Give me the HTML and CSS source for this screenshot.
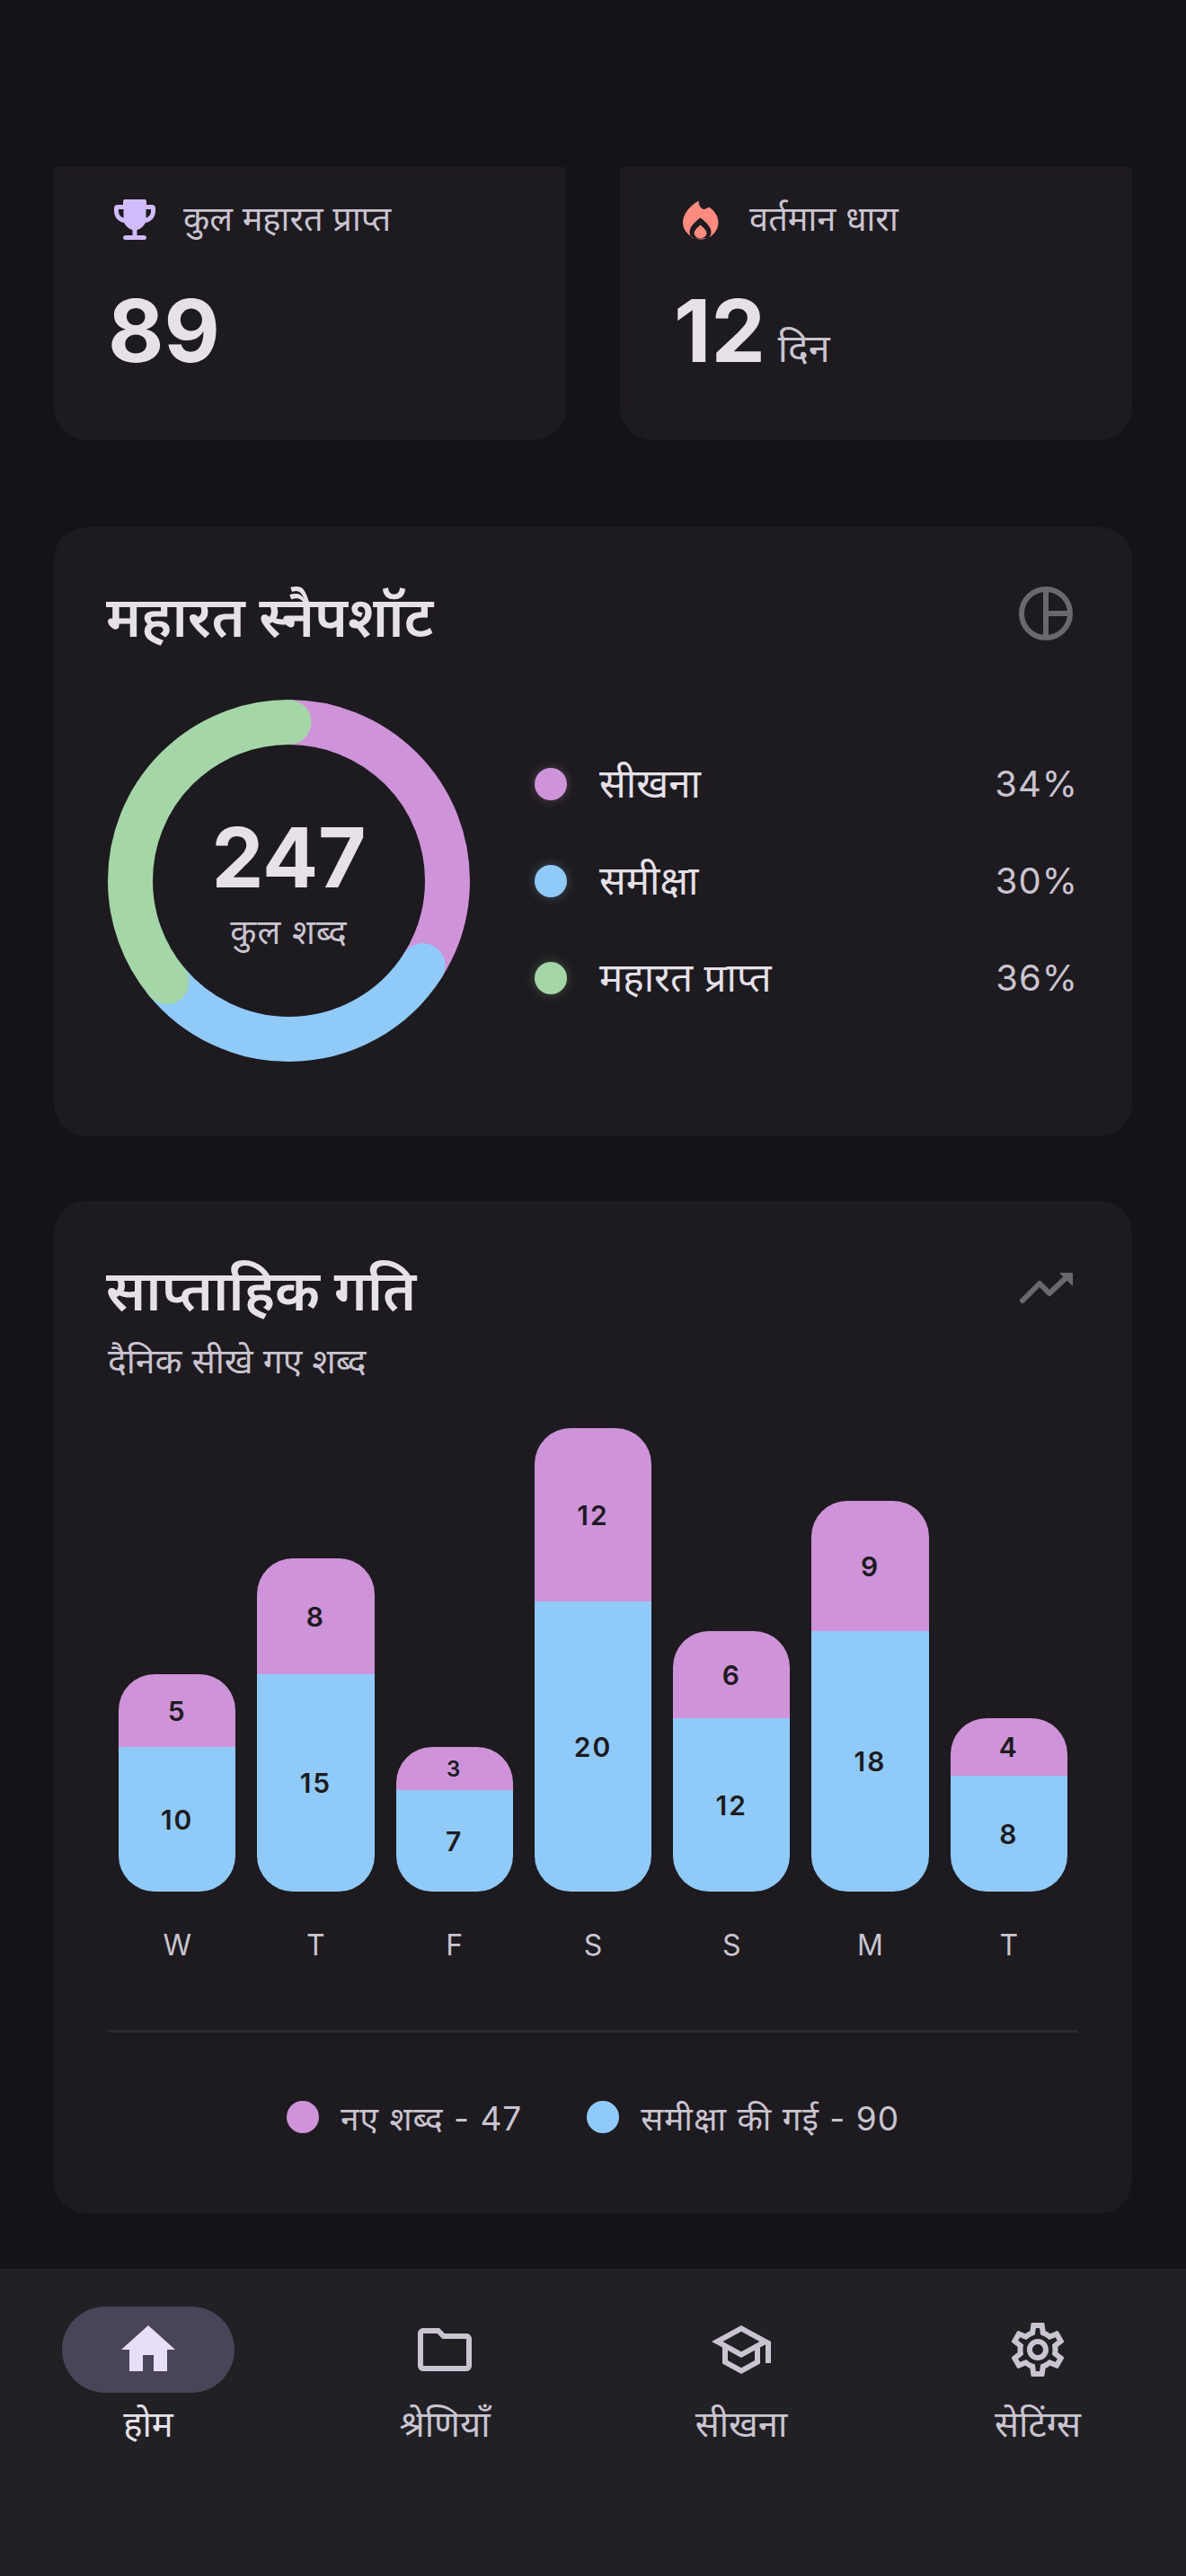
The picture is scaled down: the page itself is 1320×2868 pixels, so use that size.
FILE: index.html
```html
<!DOCTYPE html>
<html lang="hi">
<head>
    <meta charset="UTF-8">
    <meta name="viewport" content="width=device-width, initial-scale=1.0">
    <title>महारत</title>
    <link rel="stylesheet" href="styles.css">
</head>
<body>
    <div class="screen">
        <div class="content">
            <div class="stats">
                <div class="stat-card">
                    <div class="stat-label">
                        <svg class="stat-icon trophy" viewBox="-7 -7 60 60"><path fill-rule="evenodd" d="M12 0H34Q36 0 36 2V6H42Q46 6 46 10V13C46 20 41 25 35 26C33 30 29 33 25.5 34V40H33Q36 40 36 42.5Q36 45 33 45H13Q10 45 10 42.5Q10 40 13 40H20.5V34C17 33 13 30 11 26C5 25 0 20 0 13V10Q0 6 4 6H10V2Q10 0 12 0ZM5 11H10.5V20.5C7 19.5 5 16.5 5 13ZM41 11H35.5V20.5C39 19.5 41 16.5 41 13Z"/></svg>
                        <span>कुल महारत प्राप्त</span>
                    </div>
                    <div class="stat-value">89</div>
                </div>
                <div class="stat-card">
                    <div class="stat-label">
                        <svg class="stat-icon flame" viewBox="-10 -8.5 60 60"><path fill-rule="evenodd" d="M17.6 0C17.6 4 19 8 23 9.5C25 9.5 27 8.5 29 7C35 11 39.5 17 39.5 24C39.5 34 31 43 20 43C9 43 0 34 0 24C0 14 9 5 17.6 0ZM19.5 19C14 23 7.5 29 7.5 35C7.5 37.5 8.5 39.5 10 41C13 42.4 26 42.4 29 41C30.5 39.5 31.5 37.5 31.5 35C31.5 29 25 23 19.5 19ZM19.5 27C16 30 12.6 33 12.6 36.2C12.6 39.2 15.5 41.5 19.5 41.5C23.5 41.5 26.5 39.2 26.5 36.2C26.5 33 23 30 19.5 27Z"/></svg>
                        <span>वर्तमान धारा</span>
                    </div>
                    <div class="stat-value">12<span class="stat-unit">दिन</span></div>
                </div>
            </div>

            <div class="card snapshot">
                <div class="card-head">
                    <h2>महारत स्नैपशॉट</h2>
                    <svg class="head-icon" viewBox="0 0 60 60"><circle cx="30" cy="30" r="27"/><path d="M30 3v54M30 30h27"/></svg>
                </div>
                <div class="snapshot-body">
                    <div class="donut">
                        <svg viewBox="0 0 403 403">
                            <circle class="seg" cx="201.5" cy="201.5" r="176.5" stroke="#ce93d8" pathLength="100" stroke-dasharray="34 66"/>
                            <circle class="seg" cx="201.5" cy="201.5" r="176.5" stroke="#90caf9" pathLength="100" stroke-dasharray="30 70" stroke-dashoffset="-34"/>
                            <circle class="seg" cx="201.5" cy="201.5" r="176.5" stroke="#a5d6a7" pathLength="100" stroke-dasharray="36 64" stroke-dashoffset="-64"/>
                        </svg>
                        <div class="donut-center">
                            <div class="donut-total">247</div>
                            <div class="donut-label">कुल शब्द</div>
                        </div>
                    </div>
                    <div class="legend">
                        <div class="legend-row">
                            <span class="dot glow-pink"></span>
                            <span class="legend-name">सीखना</span>
                            <span class="legend-pct">34%</span>
                        </div>
                        <div class="legend-row">
                            <span class="dot glow-blue"></span>
                            <span class="legend-name">समीक्षा</span>
                            <span class="legend-pct">30%</span>
                        </div>
                        <div class="legend-row">
                            <span class="dot glow-green"></span>
                            <span class="legend-name">महारत प्राप्त</span>
                            <span class="legend-pct">36%</span>
                        </div>
                    </div>
                </div>
            </div>

            <div class="card weekly">
                <div class="card-head">
                    <div>
                        <h2>साप्ताहिक गति</h2>
                        <p class="subtitle">दैनिक सीखे गए शब्द</p>
                    </div>
                    <svg class="trend-icon" viewBox="0 0 60 36"><path class="trend-line" d="M3 32 L22 13 L33 24 L51 7"/><path class="trend-head" d="M44 1h15v15z"/></svg>
                </div>
                <div class="chart">
                    <div class="col">
                        <div class="bar">
                            <div class="seg-new" style="height:81px">5</div>
                            <div class="seg-review" style="height:161px">10</div>
                        </div>
                        <div class="day">W</div>
                    </div>
                    <div class="col">
                        <div class="bar">
                            <div class="seg-new" style="height:129px">8</div>
                            <div class="seg-review" style="height:242px">15</div>
                        </div>
                        <div class="day">T</div>
                    </div>
                    <div class="col">
                        <div class="bar">
                            <div class="seg-new small" style="height:48px">3</div>
                            <div class="seg-review" style="height:113px">7</div>
                        </div>
                        <div class="day">F</div>
                    </div>
                    <div class="col">
                        <div class="bar">
                            <div class="seg-new" style="height:193px">12</div>
                            <div class="seg-review" style="height:323px">20</div>
                        </div>
                        <div class="day">S</div>
                    </div>
                    <div class="col">
                        <div class="bar">
                            <div class="seg-new" style="height:97px">6</div>
                            <div class="seg-review" style="height:193px">12</div>
                        </div>
                        <div class="day">S</div>
                    </div>
                    <div class="col">
                        <div class="bar">
                            <div class="seg-new" style="height:145px">9</div>
                            <div class="seg-review" style="height:290px">18</div>
                        </div>
                        <div class="day">M</div>
                    </div>
                    <div class="col">
                        <div class="bar">
                            <div class="seg-new" style="height:64px">4</div>
                            <div class="seg-review" style="height:129px">8</div>
                        </div>
                        <div class="day">T</div>
                    </div>
                </div>
                <div class="divider"></div>
                <div class="chart-legend">
                    <div class="chart-legend-item"><span class="dot pink"></span>नए शब्द - 47</div>
                    <div class="chart-legend-item"><span class="dot blue"></span>समीक्षा की गई - 90</div>
                </div>
            </div>
        </div>

        <div class="bottom-nav">
            <div class="nav-item active">
                <div class="nav-pill">
                    <svg viewBox="0 0 24 24"><path d="M10 20v-6h4v6h5v-8h3L12 3 2 12h3v8z"/></svg>
                </div>
                <span>होम</span>
            </div>
            <div class="nav-item">
                <div class="nav-pill">
                    <svg viewBox="0 0 24 24"><path d="M9.17 6l2 2H20v10H4V6h5.17M10 4H4c-1.1 0-1.99.9-1.99 2L2 18c0 1.1.9 2 2 2h16c1.1 0 2-.9 2-2V8c0-1.1-.9-2-2-2h-8l-2-2z"/></svg>
                </div>
                <span>श्रेणियाँ</span>
            </div>
            <div class="nav-item">
                <div class="nav-pill">
                    <svg viewBox="0 0 24 24"><path d="M12 3L1 9l4 2.18v6L12 21l7-3.82v-6l2-1.09V17h2V9L12 3zm6.82 6L12 12.72 5.18 9 12 5.28 18.82 9zM17 15.99l-5 2.73-5-2.73v-3.72L12 15l5-2.73v3.72z"/></svg>
                </div>
                <span>सीखना</span>
            </div>
            <div class="nav-item">
                <div class="nav-pill">
                    <svg viewBox="0 0 24 24"><path d="M19.43 12.98c.04-.32.07-.64.07-.98 0-.34-.03-.66-.07-.98l2.11-1.65c.19-.15.24-.42.12-.64l-2-3.46c-.09-.16-.26-.25-.44-.25-.06 0-.12.01-.17.03l-2.49 1c-.52-.4-1.08-.73-1.69-.98l-.38-2.65C14.46 2.18 14.25 2 14 2h-4c-.25 0-.46.18-.49.42l-.38 2.65c-.61.25-1.17.59-1.69.98l-2.49-1c-.06-.02-.12-.03-.18-.03-.17 0-.34.09-.43.25l-2 3.46c-.13.22-.07.49.12.64l2.11 1.65c-.04.32-.07.65-.07.98 0 .33.03.66.07.98l-2.11 1.65c-.19.15-.24.42-.12.64l2 3.46c.09.16.26.25.44.25.06 0 .12-.01.17-.03l2.49-1c.52.4 1.08.73 1.69.98l.38 2.65c.03.24.24.42.49.42h4c.25 0 .46-.18.49-.42l.38-2.65c.61-.25 1.17-.59 1.69-.98l2.49 1c.06.02.12.03.18.03.17 0 .34-.09.43-.25l2-3.46c.12-.22.07-.49-.12-.64l-2.11-1.65zm-1.98-1.71c.04.31.05.52.05.73 0 .21-.02.43-.05.73l-.14 1.13.89.7 1.08.84-.7 1.21-1.27-.51-1.04-.42-.9.68c-.43.32-.84.56-1.25.73l-1.06.43-.16 1.13-.2 1.35h-1.4l-.19-1.35-.16-1.13-1.06-.43c-.43-.18-.83-.41-1.23-.71l-.91-.7-1.06.43-1.27.51-.7-1.21 1.08-.84.89-.7-.14-1.13c-.03-.31-.05-.54-.05-.74s.02-.43.05-.73l.14-1.13-.89-.7-1.08-.84.7-1.21 1.27.51 1.04.42.9-.68c.43-.32.84-.56 1.25-.73l1.06-.43.16-1.13.2-1.35h1.39l.19 1.35.16 1.13 1.06.43c.43.18.83.41 1.23.71l.91.7 1.06-.43 1.27-.51.7 1.21-1.07.85-.89.7.14 1.13zM12 8c-2.21 0-4 1.79-4 4s1.79 4 4 4 4-1.79 4-4-1.79-4-4-4zm0 6c-1.1 0-2-.9-2-2s.9-2 2-2 2 .9 2 2-.9 2-2 2z"/></svg>
                </div>
                <span>सेटिंग्स</span>
            </div>
        </div>
    </div>
</body>
</html>
```

FILE: styles.css
```css
* {
    box-sizing: border-box;
}
html, body {
    margin: 0;
    padding: 0;
}
body {
    font-family: 'Inter', 'Noto Sans', sans-serif;
    background-color: #141318;
    color: #e6e0e9;
}
.screen {
    width: 1320px;
    height: 2868px;
    display: flex;
    flex-direction: column;
    overflow: hidden;
}
.content {
    flex: 1;
    padding: 186px 60px 0;
}

/* top stat cards */
.stats {
    display: flex;
    gap: 60px;
}
.stat-card {
    flex: 1;
    height: 304px;
    padding: 29px 60px 0;
    background-color: #1d1b1f;
    border-radius: 0 0 36px 36px;
}
.stat-label {
    display: flex;
    align-items: center;
    gap: 24px;
    height: 60px;
    font-size: 38px;
    color: #cac4d0;
}
.stat-label span {
    margin-bottom: 6px;
}
.stat-icon {
    width: 60px;
    height: 60px;
    flex-shrink: 0;
}
.trophy {
    fill: #d0bcff;
}
.flame {
    fill: #ff8a80;
}
.stat-value {
    margin-top: 35px;
    font-size: 96px;
    font-weight: 700;
    line-height: 116px;
}
.stat-unit {
    margin-left: 14px;
    font-size: 43px;
    font-weight: 400;
    color: #cac4d0;
}

/* cards */
.card {
    background-color: #1d1b1f;
    border-radius: 36px;
    padding: 60px;
}
.card-head {
    display: flex;
    justify-content: space-between;
    align-items: flex-start;
}
.card h2 {
    margin: 0 0 0 -2px;
    font-size: 62px;
    font-weight: 600;
    line-height: 80px;
}
.snapshot {
    margin-top: 97px;
    height: 678px;
}
.head-icon {
    width: 60px;
    height: 60px;
    margin: 6px 6px 0 0;
    fill: none;
    stroke: #6a686e;
    stroke-width: 6;
}
.snapshot-body {
    display: flex;
    align-items: center;
    margin-top: 52px;
}
.donut {
    position: relative;
    width: 403px;
    height: 403px;
    flex-shrink: 0;
}
.donut svg {
    display: block;
    width: 403px;
    height: 403px;
    transform: rotate(-90deg);
}
.seg {
    fill: none;
    stroke-width: 50;
    stroke-linecap: round;
}
.donut-center {
    position: absolute;
    top: 0;
    left: 0;
    right: 0;
    bottom: 0;
    display: flex;
    flex-direction: column;
    align-items: center;
    justify-content: center;
    padding-top: 5px;
}
.donut-total {
    margin-bottom: 7px;
    font-size: 92px;
    font-weight: 700;
    line-height: 100px;
}
.donut-label {
    font-size: 38px;
    line-height: 50px;
    letter-spacing: 1px;
    color: #cac4d0;
}
.legend {
    flex: 1;
    display: flex;
    flex-direction: column;
    gap: 48px;
    margin-left: 72px;
}
.legend-row {
    display: flex;
    align-items: center;
    height: 60px;
    font-size: 44px;
}
.dot {
    width: 36px;
    height: 36px;
    border-radius: 50%;
    flex-shrink: 0;
}
.pink {
    background-color: #ce93d8;
}
.blue {
    background-color: #90caf9;
}
.glow-pink {
    background-color: #ce93d8;
    box-shadow: 0 0 12px rgba(206,147,216,0.3);
}
.glow-blue {
    background-color: #90caf9;
    box-shadow: 0 0 12px rgba(144,202,249,0.3);
}
.glow-green {
    background-color: #a5d6a7;
    box-shadow: 0 0 12px rgba(165,214,167,0.3);
}
.legend-name {
    flex: 1;
    margin: 0 0 4px 36px;
}
.legend-pct {
    font-size: 40px;
    color: #cac4d0;
    letter-spacing: 1px;
}

/* weekly chart */
.weekly {
    margin-top: 72px;
    height: 1127px;
}
.subtitle {
    margin: 14px 0 0;
    font-size: 39px;
    line-height: 48px;
    color: #cac4d0;
}
.trend-icon {
    width: 60px;
    height: 36px;
    margin-top: 19px;
    margin-right: 5px;
}
.trend-line {
    fill: none;
    stroke: #6a686e;
    stroke-width: 6;
    stroke-linecap: round;
    stroke-linejoin: round;
}
.trend-head {
    fill: #6a686e;
}
.chart {
    display: flex;
    align-items: flex-end;
    gap: 24px;
    height: 600px;
    padding: 0 12px;
    margin-top: 47px;
}
.col {
    flex: 1;
}
.bar {
    border-radius: 40px;
    overflow: hidden;
    font-size: 30px;
    font-weight: 600;
    letter-spacing: 2px;
    color: #1d1b20;
}
.seg-new, .seg-review {
    display: flex;
    align-items: center;
    justify-content: center;
}
.seg-new {
    background-color: #ce93d8;
}
.seg-review {
    background-color: #90caf9;
}
.small {
    font-size: 24px;
}
.day {
    height: 40px;
    margin-top: 40px;
    font-size: 32px;
    line-height: 40px;
    text-align: center;
    color: #cac4d0;
}
.divider {
    height: 3px;
    margin-top: 74px;
    background-color: #2b292f;
}
.chart-legend {
    display: flex;
    justify-content: center;
    gap: 72px;
    margin-top: 72px;
}
.chart-legend-item {
    display: flex;
    align-items: center;
    gap: 24px;
    height: 44px;
    font-size: 37px;
    color: #cac4d0;
    letter-spacing: 1px;
}

/* bottom nav */
.bottom-nav {
    display: flex;
    height: 342px;
    padding-top: 42px;
    background-color: #212024;
}
.nav-item {
    flex: 1;
    display: flex;
    flex-direction: column;
    align-items: center;
    font-size: 40px;
    line-height: 54px;
    color: #cac4d0;
}
.nav-pill {
    display: flex;
    align-items: center;
    justify-content: center;
    width: 192px;
    height: 96px;
    margin-bottom: 8px;
    border-radius: 48px;
}
.nav-pill svg {
    width: 72px;
    height: 72px;
    fill: #cac4d0;
}
.active {
    color: #e6e0e9;
}
.active .nav-pill {
    background-color: #4a4458;
}
.active .nav-pill svg {
    fill: #e8def8;
}
```
